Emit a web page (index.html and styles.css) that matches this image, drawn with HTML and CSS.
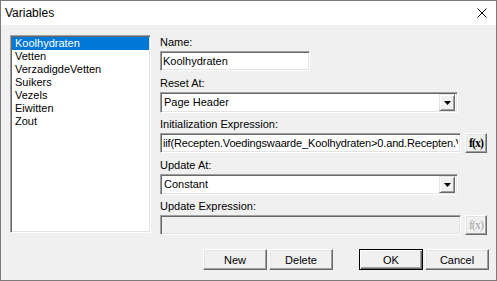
FILE: index.html
```html
<!DOCTYPE html>
<html lang="nl">
<head>
  <meta charset="UTF-8">
  <title>Variables</title>
  <link rel="stylesheet" href="styles.css">
</head>
<body>
  <div class="dialog">
    <div class="titlebar">
      <span class="title">Variables</span>
      <svg class="close" width="10" height="10" viewBox="0 0 10 10">
        <path d="M0.5 0.5 L9.5 9.5 M9.5 0.5 L0.5 9.5" stroke="#000" stroke-width="1" fill="none"/>
      </svg>
    </div>

    <div class="main">
      <ul class="listbox">
        <li class="selected">Koolhydraten</li>
        <li>Vetten</li>
        <li>VerzadigdeVetten</li>
        <li>Suikers</li>
        <li>Vezels</li>
        <li>Eiwitten</li>
        <li>Zout</li>
      </ul>

      <div class="fields">
        <label class="field-label">Name:</label>
        <input class="edit name-edit" type="text" value="Koolhydraten">

        <label class="field-label">Reset At:</label>
        <div class="combo">
          <span class="combo-text">Page Header</span>
          <span class="combo-btn"><svg width="7" height="4" viewBox="0 0 7 4"><path d="M0 0 H7 L3.5 4 Z" fill="#000"/></svg></span>
        </div>

        <label class="field-label">Initialization Expression:</label>
        <div class="expr-row">
          <input class="edit expr-edit" type="text" value="iif(Recepten.Voedingswaarde_Koolhydraten&gt;0.and.Recepten.Voedingswaarde_Koolhydraten">
          <button class="fx">f(x)</button>
        </div>

        <label class="field-label">Update At:</label>
        <div class="combo">
          <span class="combo-text">Constant</span>
          <span class="combo-btn"><svg width="7" height="4" viewBox="0 0 7 4"><path d="M0 0 H7 L3.5 4 Z" fill="#000"/></svg></span>
        </div>

        <label class="field-label">Update Expression:</label>
        <div class="expr-row last">
          <input class="edit expr-edit" type="text" value="" disabled>
          <button class="fx" disabled>f(x)</button>
        </div>
      </div>
    </div>

    <div class="buttons">
      <button class="btn">New</button>
      <button class="btn">Delete</button>
      <button class="btn btn-default ok">OK</button>
      <button class="btn">Cancel</button>
    </div>
  </div>
</body>
</html>
```

FILE: styles.css
```css
body {
  margin: 0;
  font-family: "Liberation Sans", Arial, sans-serif;
  font-size: 11px;
  color: #000;
}
.dialog {
  width: 497px;
  height: 281px;
  box-sizing: border-box;
  border: 1px solid #7a7a7a;
  background-color: #f0f0f0;
}
.titlebar {
  height: 24px;
  background-color: #fff;
  display: flex;
  align-items: center;
  justify-content: space-between;
  padding: 0 9px 0 4px;
}
.title {
  font-size: 12px;
}
.main {
  display: flex;
  padding: 10px 0 0 9px;
}
.listbox {
  width: 141px;
  height: 198px;
  box-sizing: border-box;
  margin: 0;
  padding: 0;
  list-style: none;
  background-color: #fff;
  border: 1px solid;
  border-color: #a0a0a0 #fff #fff #a0a0a0;
  box-shadow: inset 1px 1px 0 #696969, inset -1px -1px 0 #e3e3e3;
  padding: 1px;
}
.listbox li {
  height: 13px;
  line-height: 13px;
  padding-left: 3px;
  white-space: nowrap;
}
.listbox li.selected {
  background-color: #0078d7;
  color: #fff;
}
.fields {
  display: flex;
  flex-direction: column;
  align-items: flex-start;
  margin-left: 9px;
  padding-top: 1px;
}
.field-label {
  height: 13px;
  line-height: 13px;
  margin-bottom: 2px;
}
.edit {
  height: 20px;
  box-sizing: border-box;
  margin: 0 0 6px 0;
  padding: 0 2px;
  font: inherit;
  color: #000;
  background-color: #fff;
  border: 1px solid;
  border-color: #a0a0a0 #fff #fff #a0a0a0;
  box-shadow: inset 1px 1px 0 #696969, inset -1px -1px 0 #e3e3e3;
  outline: none;
}
.edit:disabled {
  background-color: #f0f0f0;
}
.name-edit {
  width: 150px;
}
.combo {
  width: 298px;
  height: 21px;
  box-sizing: border-box;
  margin-bottom: 5px;
  display: flex;
  align-items: center;
  justify-content: space-between;
  background-color: #fff;
  border: 1px solid;
  border-color: #a0a0a0 #fff #fff #a0a0a0;
  box-shadow: inset 1px 1px 0 #696969, inset -1px -1px 0 #e3e3e3;
  padding: 1px 2px 2px 3px;
}
.combo-btn {
  width: 16px;
  height: 17px;
  box-sizing: border-box;
  display: flex;
  align-items: center;
  justify-content: center;
  background-color: #f0f0f0;
  border: 1px solid;
  border-color: #e3e3e3 #696969 #696969 #e3e3e3;
  box-shadow: inset 1px 1px 0 #fff, inset -1px -1px 0 #a0a0a0;
  margin-top: 1px;
}
.expr-row {
  display: flex;
  align-items: flex-start;
  gap: 4px;
  margin-bottom: 6px;
}
.expr-row.last {
  margin-bottom: 0;
}
.expr-row .edit {
  margin: 0;
}
.expr-edit {
  width: 301px;
  letter-spacing: -0.15px;
}
.fx {
  width: 22px;
  height: 20px;
  box-sizing: border-box;
  padding: 0;
  font-family: "Liberation Serif", "Times New Roman", serif;
  font-weight: bold;
  font-size: 12px;
  letter-spacing: -1px;
  color: #000;
  background-color: #f0f0f0;
  border: 1px solid;
  border-color: #fff #696969 #696969 #fff;
  box-shadow: inset -1px -1px 0 #a0a0a0, inset 1px 1px 0 #e3e3e3;
}
.fx:disabled {
  color: #a0a0a0;
  font-weight: normal;
  text-shadow: 1px 1px 0 #fff;
}
.buttons {
  display: flex;
  justify-content: flex-end;
  gap: 2px;
  padding-right: 7px;
  margin-top: 14px;
}
.btn {
  width: 64px;
  height: 21px;
  box-sizing: border-box;
  padding: 0;
  font: inherit;
  font-size: 11px;
  color: #000;
  background-color: #f0f0f0;
  border: 1px solid;
  border-color: #fff #696969 #696969 #fff;
  box-shadow: inset -1px -1px 0 #a0a0a0, inset 1px 1px 0 #e3e3e3;
}
.btn-default {
  border-color: #000;
  box-shadow: inset 1px 1px 0 #fff, inset -1px -1px 0 #696969, inset -2px -2px 0 #a0a0a0;
}
.ok {
  margin-left: 24px;
}
```
